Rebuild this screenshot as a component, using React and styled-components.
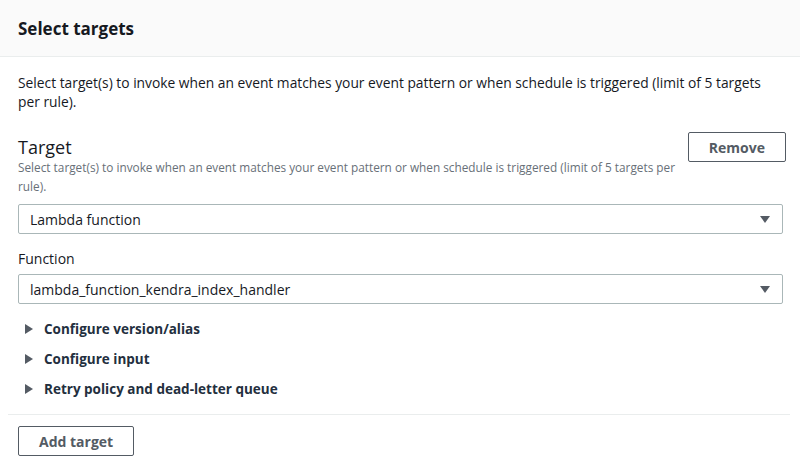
import React from 'react';
import styled, { createGlobalStyle } from 'styled-components';

const GlobalStyle = createGlobalStyle`
  body {
    margin: 0;
    background: #ffffff;
    font-family: "Open Sans", "Liberation Sans", Arial, sans-serif;
    color: #16191f;
  }
`;

const Panel = styled.section`
  width: 800px;
  height: 474px;
  overflow: hidden;
  background: #fff;
`;

const Header = styled.header`
  height: 56px;
  background: #fafafa;
  border-bottom: 1px solid #eaeded;
  padding: 0 18px;
  display: flex;
  align-items: center;
`;

const Title = styled.h2`
  margin: 0;
  font-size: 17px;
  font-weight: 700;
  color: #16191f;
`;

const Body = styled.div`
  padding: 16px 17px 0 18px;
`;

const Intro = styled.p`
  margin: 0;
  font-size: 13.8px;
  line-height: 19px;
`;

const TargetHead = styled.div`
  display: flex;
  justify-content: space-between;
  align-items: flex-start;
  margin-top: 21px;
`;

const HeadText = styled.div`
  max-width: 670px;
`;

const SectionTitle = styled.h3`
  margin: 0;
  font-size: 18px;
  font-weight: 400;
  line-height: 22px;
  margin-top: 4px;
`;

const Hint = styled.p`
  margin: 0;
  font-size: 11.8px;
  line-height: 19px;
  color: #687078;
`;

const Button = styled.button`
  font-family: inherit;
  font-size: 14px;
  font-weight: 700;
  color: #545b64;
  background: #fff;
  border: 1px solid #545b64;
  border-radius: 2px;
  height: 30px;
  padding: 0 ${(p) => p.$pad || 20}px;
  margin-right: ${(p) => p.$shift || 0}px;
  cursor: pointer;
`;

const Select = styled.div`
  margin-top: ${(p) => p.$top || 0}px;
  height: 28px;
  border: 1px solid #aab7b8;
  border-radius: 2px;
  display: flex;
  align-items: center;
  justify-content: space-between;
  padding: 0 12px 0 11px;
  font-size: 14px;
  color: #16191f;
`;

const Caret = styled.span`
  width: 0;
  height: 0;
  border-left: 5px solid transparent;
  border-right: 5px solid transparent;
  border-top: 7px solid #545b64;
`;

const Label = styled.div`
  margin-top: 16px;
  font-size: 14px;
  line-height: 18px;
`;

const Expanders = styled.div`
  margin-top: 10px;
  display: flex;
  flex-direction: column;
`;

const Expander = styled.div`
  height: 30px;
  display: flex;
  align-items: center;
  gap: 11px;
  padding-left: 7px;
  font-size: 13.5px;
  font-weight: 700;
  color: #232f3e;
`;

const Arrow = styled.span`
  width: 0;
  height: 0;
  border-top: 5px solid transparent;
  border-bottom: 5px solid transparent;
  border-left: 8px solid #545b64;
`;

const Divider = styled.hr`
  margin: 10px -7px 11px -10px;
  border: 0;
  border-top: 1px solid #eaeded;
`;

const expanders = [
  'Configure version/alias',
  'Configure input',
  'Retry policy and dead-letter queue',
];

export default function App() {
  return (
    <Panel>
      <GlobalStyle />
      <Header>
        <Title>Select targets</Title>
      </Header>
      <Body>
        <Intro>
          Select target(s) to invoke when an event matches your event pattern or when schedule is
          triggered (limit of 5 targets per rule).
        </Intro>
        <TargetHead>
          <HeadText>
            <SectionTitle>Target</SectionTitle>
            <Hint>
              Select target(s) to invoke when an event matches your event pattern or when schedule is
              triggered (limit of 5 targets per rule).
            </Hint>
          </HeadText>
          <Button $pad={20} $shift={-3}>Remove</Button>
        </TargetHead>
        <Select $top={8}>
          <span>Lambda function</span>
          <Caret />
        </Select>
        <Label>Function</Label>
        <Select $top={6}>
          <span>lambda_function_kendra_index_handler</span>
          <Caret />
        </Select>
        <Expanders>
          {expanders.map((t) => (
            <Expander key={t}>
              <Arrow />
              {t}
            </Expander>
          ))}
        </Expanders>
        <Divider />
        <Button $pad={20}>Add target</Button>
      </Body>
    </Panel>
  );
}
